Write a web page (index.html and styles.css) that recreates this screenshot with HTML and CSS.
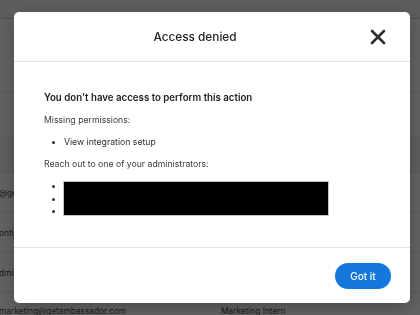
FILE: index.html
```html
<!DOCTYPE html>
<html>
<head>
    <meta charset="UTF-8">
    <title>Access denied</title>
    <link rel="stylesheet" href="styles.css">
</head>
<body>
    <div class="page">
        <div class="topbar"></div>
        <div class="block block-tall"></div>
        <div class="block block-mid"></div>
        <div class="table-head"></div>
        <div class="row"><span class="cell-email">@getambassador.com</span><span class="cell-role">Administrator</span></div>
        <div class="row"><span class="cell-email">ontiveros@getambassador.com</span><span class="cell-role">Sales Manager</span></div>
        <div class="row"><span class="cell-email">dmin@getambassador.com</span><span class="cell-role">Administrator</span></div>
        <div class="row row-last"><span class="cell-email">marketing@getambassador.com</span><span class="cell-role">Marketing Intern</span></div>
    </div>

    <div class="overlay">
        <div class="modal">
            <div class="modal-header">
                <h2 class="modal-title">Access denied</h2>
                <button class="close-btn" aria-label="Close">
                    <svg width="16" height="16" viewBox="0 0 16 16">
                        <path d="M2 2 L14 14 M14 2 L2 14" stroke="#2d2d2d" stroke-width="2.6" stroke-linecap="round"/>
                    </svg>
                </button>
            </div>

            <div class="modal-body">
                <h3 class="body-title">You don't have access to perform this action</h3>
                <p class="body-text">Missing permissions:</p>
                <ul class="perm-list">
                    <li>View integration setup</li>
                </ul>
                <p class="body-text">Reach out to one of your administrators:</p>
                <ul class="admin-list">
                    <li>&nbsp;</li>
                    <li>&nbsp;</li>
                    <li>&nbsp;</li>
                    <div class="redacted"></div>
                </ul>
            </div>

            <div class="modal-footer">
                <button class="ok-btn">Got it</button>
            </div>
        </div>
    </div>
</body>
</html>
```

FILE: styles.css
```css
* {
    margin: 0;
    padding: 0;
    box-sizing: border-box;
}

body {
    font-family: 'Inter', 'Liberation Sans', sans-serif;
    background-color: #ffffff;
    width: 420px;
    height: 315px;
    overflow: hidden;
}

/* Page derrière la modale */
.page {
    width: 420px;
    height: 315px;
    background: #ffffff;
    overflow: hidden;
}

.topbar {
    height: 19px;
    background: #f4f4f4;
    border-bottom: 1px solid #b6d0ea;
}

.block {
    border-bottom: 1px solid #e6e6e6;
}

.block-tall {
    height: 74px;
}

.block-mid {
    height: 45px;
}

.table-head {
    height: 35px;
    background: #f3f3f3;
    border-bottom: 1px solid #e6e6e6;
}

.row {
    height: 40px;
    display: flex;
    align-items: center;
    border-bottom: 1px solid #e6e6e6;
    font-size: 8.3px;
    color: #444;
}

.row-last {
    height: 23px;
    align-items: flex-start;
    padding-top: 13px;
    border-bottom: none;
}

.cell-email {
    width: 222px;
    margin-left: -1px;
    white-space: nowrap;
}

.cell-role {
    white-space: nowrap;
}

/* Fond sombre */
.overlay {
    position: fixed;
    top: 0;
    left: 0;
    width: 100%;
    height: 100%;
    background: rgba(0, 0, 0, 0.62);
    display: flex;
    align-items: center;
    padding-left: 14px;
}

.modal {
    width: 396px;
    height: 291px;
    background: #ffffff;
    border-radius: 5px;
    box-shadow: 0 4px 16px rgba(0, 0, 0, 0.25);
    display: flex;
    flex-direction: column;
}

.modal-header {
    height: 50px;
    display: flex;
    align-items: center;
    padding: 0 22px 0 8px;
    border-bottom: 1px solid #e2e2e2;
}

.modal-title {
    flex: 1;
    text-align: center;
    font-size: 11.8px;
    font-weight: 500;
    color: #222;
}

.close-btn {
    width: 20px;
    height: 20px;
    border: none;
    background: none;
    display: flex;
    align-items: center;
    justify-content: center;
    cursor: pointer;
}

.modal-body {
    flex: 1;
    padding: 28px 30px 0 30px;
    color: #333;
}

.body-title {
    font-size: 9.7px;
    font-weight: 600;
    line-height: 16px;
    color: #222;
    margin-bottom: 7px;
}

.body-text {
    font-size: 8.7px;
    line-height: 14px;
    color: #3a3a3a;
}

.perm-list {
    list-style: disc;
    padding-left: 20px;
    margin: 8px 0 8px;
    font-size: 8.7px;
    line-height: 14px;
    color: #2e2e2e;
}

.admin-list {
    position: relative;
    list-style: disc;
    padding-left: 20px;
    margin-top: 9px;
    font-size: 8.7px;
    line-height: 12.5px;
    color: #333;
}

.redacted {
    position: absolute;
    left: 19px;
    top: 1px;
    width: 266px;
    height: 35px;
    background: #000000;
    border: 1px solid #c4c4c4;
}

.modal-footer {
    height: 56px;
    border-top: 1px solid #e2e2e2;
    display: flex;
    justify-content: flex-end;
    align-items: flex-start;
    padding: 15px 19px 0 0;
}

.ok-btn {
    width: 56px;
    height: 26px;
    border: none;
    border-radius: 13px;
    background-color: #1477db;
    color: #ffffff;
    font-family: 'Inter', 'Liberation Sans', sans-serif;
    font-size: 10px;
    font-weight: 500;
    cursor: pointer;
}
```
